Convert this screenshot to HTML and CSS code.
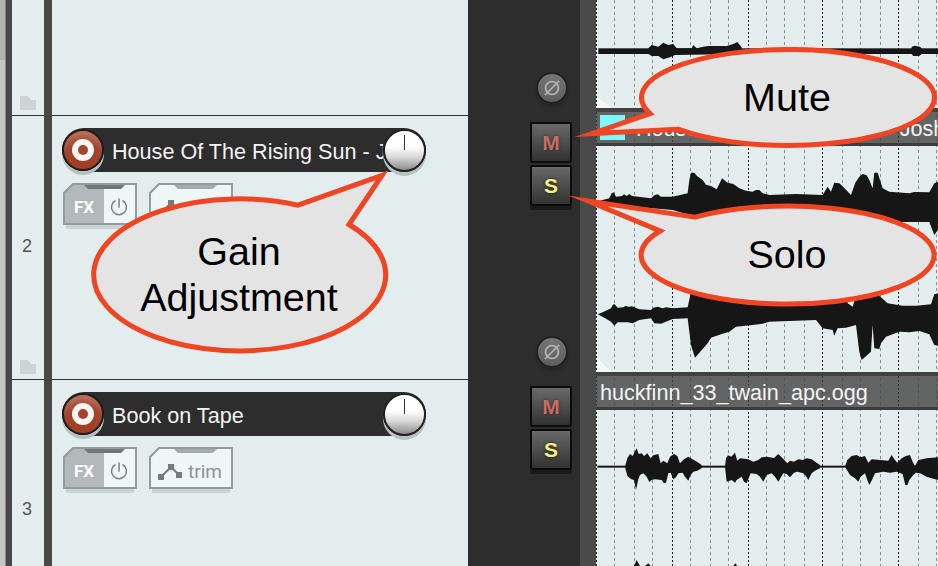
FILE: index.html
```html
<!DOCTYPE html>
<html lang="en">
<head>
  <meta charset="UTF-8" />
  <title>Track controls</title>
  <link rel="stylesheet" href="styles.css">
</head>
<body>
  <div class="app">
    <div class="edge"></div>

    <!-- track numbers -->
    <div class="numbers">
      <div class="num-row">
        <span></span>
        <svg class="folder" width="16" height="14" viewBox="0 0 16 14"><polygon points="0,0 8,0 11,4 16,4 16,14 0,14"/></svg>
      </div>
      <div class="num-row">
        <span>2</span>
        <svg class="folder" width="16" height="14" viewBox="0 0 16 14"><polygon points="0,0 8,0 11,4 16,4 16,14 0,14"/></svg>
      </div>
      <div class="num-row">
        <span>3</span>
      </div>
    </div>

    <div class="divider"></div>

    <!-- track panel -->
    <div class="tracks">
      <div class="track"></div>

      <div class="track">
        <div class="track-bar">
          <button class="rec"><span class="rec-dot"></span></button>
          <span class="track-name">House Of The Rising Sun - Josh</span>
          <div class="knob"></div>
        </div>
        <div class="chips">
          <svg class="chip" width="74" height="46" viewBox="0 0 74 46">
            <polygon class="chip-on" points="10,1 41,1 41,41 1,41 1,10"/>
            <rect class="chip-off" x="41" y="1" width="32" height="40"/>
            <polygon class="chip-line" points="10,1 73,1 73,41 1,41 1,10"/>
            <polygon class="chip-notch" points="21,2 62,2 58,6 25,6"/>
            <rect class="chip-shadow" x="3" y="42" width="68" height="4"/>
            <text class="chip-fx" x="11" y="30">FX</text>
            <path class="chip-power" d="M52.500 17.500a7.500 7.500 0 1 0 7 0M56 15.500v9"/>
          </svg>
          <svg class="chip" width="84" height="46" viewBox="0 0 84 46">
            <polygon class="chip-off" points="10,1 83,1 83,41 1,41 1,10"/>
            <polygon class="chip-line" points="10,1 83,1 83,41 1,41 1,10"/>
            <polygon class="chip-notch chip-notch-light" points="25,2 68,2 64,6 29,6"/>
            <rect class="chip-shadow" x="3" y="42" width="78" height="4"/>
            <path class="chip-env" d="M12 30l10-10 8 8"/>
            <rect class="chip-node" x="9" y="27" width="6" height="6"/>
            <rect class="chip-node" x="19" y="17" width="6" height="6"/>
            <rect class="chip-node" x="27" y="25" width="6" height="6"/>
            <text class="chip-trim" x="39" y="31">trim</text>
          </svg>
        </div>
      </div>

      <div class="track">
        <div class="track-bar">
          <button class="rec"><span class="rec-dot"></span></button>
          <span class="track-name">Book on Tape</span>
          <div class="knob"></div>
        </div>
        <div class="chips">
          <svg class="chip" width="74" height="46" viewBox="0 0 74 46">
            <polygon class="chip-on" points="10,1 41,1 41,41 1,41 1,10"/>
            <rect class="chip-off" x="41" y="1" width="32" height="40"/>
            <polygon class="chip-line" points="10,1 73,1 73,41 1,41 1,10"/>
            <polygon class="chip-notch" points="21,2 62,2 58,6 25,6"/>
            <rect class="chip-shadow" x="3" y="42" width="68" height="4"/>
            <text class="chip-fx" x="11" y="30">FX</text>
            <path class="chip-power" d="M52.500 17.500a7.500 7.500 0 1 0 7 0M56 15.500v9"/>
          </svg>
          <svg class="chip" width="84" height="46" viewBox="0 0 84 46">
            <polygon class="chip-off" points="10,1 83,1 83,41 1,41 1,10"/>
            <polygon class="chip-line" points="10,1 83,1 83,41 1,41 1,10"/>
            <polygon class="chip-notch chip-notch-light" points="25,2 68,2 64,6 29,6"/>
            <rect class="chip-shadow" x="3" y="42" width="78" height="4"/>
            <path class="chip-env" d="M12 30l10-10 8 8"/>
            <rect class="chip-node" x="9" y="27" width="6" height="6"/>
            <rect class="chip-node" x="19" y="17" width="6" height="6"/>
            <rect class="chip-node" x="27" y="25" width="6" height="6"/>
            <text class="chip-trim" x="39" y="31">trim</text>
          </svg>
        </div>
      </div>
    </div>

    <!-- mixer strip -->
    <div class="mixer">
      <div class="strip">
        <button class="phase"><svg width="20" height="20" viewBox="0 0 20 20"><circle cx="10" cy="10" r="6.500"/><path d="M3 17L17 3"/></svg></button>
      </div>
      <div class="strip">
        <button class="btn btn-mute">M</button>
        <button class="btn btn-solo">S</button>
        <button class="phase"><svg width="20" height="20" viewBox="0 0 20 20"><circle cx="10" cy="10" r="6.500"/><path d="M3 17L17 3"/></svg></button>
      </div>
      <div class="strip">
        <button class="btn btn-mute">M</button>
        <button class="btn btn-solo">S</button>
      </div>
    </div>

    <div class="scrollbar"></div>

    <!-- arrange view -->
    <div class="arrange">
      <svg class="grid" width="342" height="566" viewBox="596 0 342 566">
        <path class="grid-dark" d="M596.500 0V566M672.500 0V566M748.500 0V566M822.500 0V566M898.500 0V566"/>
        <path class="grid-light" d="M614.500 0V566M634.500 0V566M652.500 0V566M690.500 0V566M710.500 0V566M728.500 0V566M766.500 0V566M784.500 0V566M804.500 0V566M842.500 0V566M860.500 0V566M880.500 0V566M918.500 0V566M936.500 0V566"/>
      </svg>

      <div class="lane lane-one">
        <svg class="wave" width="342" height="108" viewBox="596 0 342 108">
          <polygon class="corner" points="597,97 597,108 612,108"/>
          <g transform="translate(500 30) scale(.3333)">
            <rect x="295" y="55" width="1020" height="17"/>
            <polygon points="445,55 455,45 475,50 490,38 505,45 520,42 530,55 575,55 580,45 590,55 610,50 625,48 680,48 700,42 712,36 725,52 725,72 525,75 510,82 490,88 475,78 455,78 445,72"/>
            <polygon points="1235,50 1245,47 1260,50 1265,55 1265,72 1258,78 1240,78 1235,72"/>
          </g>
        </svg>
      </div>

      <div class="lane lane-two">
        <div class="clip-head">
          <span class="swatch"></span>
          <span class="clip-name">House Of The Rising Sun - Josh</span>
        </div>
        <svg class="wave" width="342" height="226" viewBox="596 146 342 226">
          <polygon class="corner" points="597,358 597,372 612,372"/>
          <g transform="translate(596 160) scale(.3333)">
            <polygon points="0,125 40,115 47,100 53,97 60,110 78,108 84,103 92,108 100,102 108,108 165,115 175,106 185,103 195,110 230,110 275,100 280,60 285,38 295,38 303,48 320,60 330,74 345,78 362,88 370,72 378,55 395,68 412,72 430,85 450,92 470,95 480,90 490,90 500,100 520,105 600,102 680,105 695,80 705,95 715,68 730,70 745,84 765,105 778,68 790,50 800,42 812,46 820,60 830,85 835,38 845,38 860,85 880,95 940,100 955,96 1000,97 1015,70 1026,65 1026,210 1015,225 1000,186 850,186 790,177 430,174 290,168 230,150 160,144 6,129"/>
          </g>
          <g transform="translate(596 275) scale(.3333)">
            <polygon points="5,118 20,112 45,100 50,90 55,87 65,98 82,97 88,93 100,95 108,94 130,103 165,105 172,98 185,95 200,100 210,97 230,100 275,97 285,50 750,50 755,85 770,95 778,70 850,62 875,85 920,92 960,92 1005,88 1015,58 1026,55 1026,212 1015,210 1000,178 970,168 940,172 910,170 870,185 855,205 850,222 835,220 830,150 825,230 797,255 790,230 780,150 750,158 725,160 715,182 710,165 680,160 660,135 580,138 520,140 500,146 470,150 420,155 400,170 375,178 345,188 335,205 297,248 285,210 275,130 230,132 195,146 175,145 165,130 130,135 110,145 95,142 65,142 55,152 45,140 25,128"/>
          </g>
        </svg>
      </div>

      <div class="lane lane-three">
        <div class="clip-head">
          <span class="clip-name clip-name-first">huckfinn_33_twain_apc.ogg</span>
        </div>
        <svg class="wave" width="342" height="156" viewBox="596 410 342 156">
          <g transform="translate(590 430) scale(.3333)">
            <rect x="22" y="107" width="1022" height="6"/>
            <polygon points="105,110 112,85 120,72 128,78 134,65 140,55 146,72 155,70 162,78 172,70 182,85 190,76 205,72 212,100 220,92 232,100 240,80 252,72 262,78 270,100 282,88 295,80 308,88 322,96 335,105 335,115 322,122 310,125 302,135 295,152 285,140 278,128 265,130 258,142 250,148 242,128 235,130 228,158 222,160 215,150 195,148 185,150 178,156 170,140 160,130 150,135 145,148 138,180 132,150 124,148 112,138"/>
            <polygon points="405,110 408,85 414,76 424,80 435,68 442,92 450,85 475,88 490,95 505,90 515,82 530,80 552,84 565,72 578,85 592,100 600,92 612,95 625,88 638,90 650,85 665,88 680,98 690,105 690,115 675,122 665,130 655,150 648,138 640,130 622,125 612,128 600,142 590,132 580,130 565,155 555,140 545,130 530,135 520,155 510,140 500,132 482,130 470,160 462,155 455,140 440,150 435,158 425,150 410,155"/>
            <polygon points="765,110 772,90 785,78 800,75 812,82 825,78 835,98 845,88 870,90 895,92 905,75 915,90 922,98 935,85 948,78 960,75 968,95 975,108 985,90 1010,85 1044,82 1044,150 1025,145 1010,140 990,130 978,128 970,135 958,150 952,166 946,165 938,132 920,125 900,128 880,125 855,130 846,150 838,165 832,150 825,130 812,140 805,155 795,145 780,135"/>
            <polygon points="132,408 140,390 150,408"/>
            <polygon points="165,408 175,400 182,408"/>
            <polygon points="430,408 436,400 442,408"/>
          </g>
        </svg>
      </div>
    </div>
  </div>

  <!-- annotation balloons on top of the screenshot -->
  <svg class="callouts" width="938" height="566" viewBox="0 0 938 566">
    <path class="balloon" d="M298 205.200L382 175.400 349 224.500A146 76 0 1 1 298 205.200Z"/>
    <text class="balloon-text" x="239" y="265">Gain</text>
    <text class="balloon-text" x="239" y="311">Adjustment</text>
    <path class="balloon" d="M650 113.600L592 133.500 678 129.200A146.500 48 0 1 0 650 113.600Z"/>
    <text class="balloon-text" x="787" y="111">Mute</text>
    <path class="balloon" d="M695 217.100L588 201 660 231A146.500 49 0 1 0 695 217.100Z"/>
    <text class="balloon-text" x="787" y="268">Solo</text>
  </svg>
</body>
</html>
```

FILE: styles.css
```css
body {
  margin: 0;
  width: 938px;
  height: 566px;
  overflow: hidden;
  position: relative;
  font-family: "Liberation Sans", Arial, sans-serif;
}

button {
  font-family: inherit;
  padding: 0;
}

.app {
  display: flex;
  height: 566px;
  background: #e4edee;
}

.edge {
  width: 12px;
  background: linear-gradient(#b2b2b2, #b2b2b2) 0 0 / 5px 60px no-repeat,
    linear-gradient(to right, #c6c6c6 0, #c6c6c6 5px, #474747 6px);
}

.numbers {
  width: 32px;
}

.num-row {
  height: 264px;
  box-sizing: border-box;
  border-bottom: 1px solid #2b3235;
  display: grid;
  grid-template-rows: 1fr auto 1fr;
  justify-items: center;
  color: #555;
  font-size: 18px;
}

.num-row span {
  grid-row: 2;
  margin: 0 2px 2px 0;
}

.num-row:first-child {
  height: 116px;
}

.num-row:last-child {
  height: 186px;
  border-bottom: none;
  grid-template-rows: 119px auto 1fr;
}

.folder {
  grid-row: 3;
  align-self: end;
  margin-bottom: 5px;
  fill: #cbd3d5;
}

.divider {
  width: 8px;
  background: #484a47;
}

.tracks {
  width: 416px;
}

.track {
  height: 264px;
  box-sizing: border-box;
  padding: 12px 0 0 10px;
  border-bottom: 1px solid #2b3235;
}

.track:first-child {
  height: 116px;
}

.track:last-child {
  height: 186px;
  border-bottom: none;
}

.track-bar {
  display: flex;
  align-items: center;
  width: 364px;
  height: 44px;
  background: #2d2d2d;
  border-radius: 22px;
}

.rec {
  flex: none;
  width: 42px;
  height: 42px;
  box-sizing: border-box;
  display: flex;
  align-items: center;
  justify-content: center;
  border: 2px solid #1d1d1d;
  border-radius: 50%;
  background: radial-gradient(circle at 50% 85%, #a23c22 0, #a0452d 55%, #c98a78 100%);
  box-shadow: 0 4px 0 #b7c1c2;
}

.rec-dot {
  width: 10px;
  height: 10px;
  border: 6px solid #fbf6f4;
  border-radius: 50%;
  background: #a2452e;
}

.track-name {
  flex: 1;
  min-width: 0;
  margin-left: 8px;
  padding-top: 3px;
  color: #f2f2f2;
  font-size: 21.6px;
  white-space: nowrap;
  overflow: hidden;
}

.knob {
  flex: none;
  position: relative;
  width: 43px;
  height: 43px;
  box-sizing: border-box;
  border: 2px solid #222;
  border-radius: 50%;
  background: linear-gradient(#fff 0, #fff 40%, #dcdcdc 65%, #8c8c8c 100%);
  box-shadow: 0 4px 0 #b7c1c2;
}

/* little pointer on the gain knob */
.knob::after {
  content: "";
  position: absolute;
  left: 19px;
  top: 4px;
  width: 1px;
  height: 15px;
  background: #333;
}

.chips {
  display: flex;
  gap: 12px;
  margin: 11px 0 0 1px;
}

.chip {
  display: block;
}

.chip-on {
  fill: #b3b8ba;
}

.chip-off {
  fill: #eef6f6;
}

.chip-line {
  fill: none;
  stroke: #919c9c;
  stroke-width: 2;
}

.chip-notch {
  fill: #6f7777;
}

.chip-notch-light {
  fill: #a3acac;
}

.chip-shadow {
  fill: #cad3d3;
}

.chip-fx {
  fill: #fff;
  font-family: Roboto, sans-serif;
  font-weight: 700;
  font-size: 17px;
}

.chip-power {
  fill: none;
  stroke: #7b8080;
  stroke-width: 1.5;
}

.chip-env {
  fill: none;
  stroke: #737b7b;
  stroke-width: 2;
}

.chip-node {
  fill: #737b7b;
}

.chip-trim {
  fill: #8a9393;
  font-family: Roboto, sans-serif;
  font-size: 19px;
}

.mixer {
  width: 112px;
  background: #2d2d2d;
}

.strip {
  height: 264px;
  box-sizing: border-box;
  padding: 6px 0 12px 62px;
  display: flex;
  flex-direction: column;
  align-items: flex-start;
  gap: 2px;
}

.strip:first-child {
  height: 116px;
}

.strip:last-child {
  height: 186px;
}

.btn {
  width: 42px;
  height: 41px;
  box-sizing: border-box;
  border: 2px solid #0c0c0c;
  border-radius: 2px;
  background: linear-gradient(#696969, #323232);
  font-size: 21px;
  font-weight: 700;
  line-height: 1;
}

.btn-mute {
  color: #c96c62;
  text-shadow: 0 0 2px #2a2a2a;
}

.btn-solo {
  color: #f5ee80;
  text-shadow: 0 0 3px #111;
  box-shadow: 0 4px 0 #1b1b1b;
}

.phase {
  margin: auto 0 0 6px;
  width: 32px;
  height: 32px;
  display: flex;
  align-items: center;
  justify-content: center;
  box-sizing: border-box;
  border: 2px solid #222;
  border-radius: 50%;
  background: linear-gradient(#757575, #5e5e5e);
  box-shadow: 0 3px 3px #262626;
}

.phase svg {
  fill: none;
  stroke: #b4b4b4;
  stroke-width: 1.7;
}

.scrollbar {
  width: 16px;
  background: #4a4a4a;
}

.arrange {
  position: relative;
  width: 342px;
  overflow: hidden;
}

.grid {
  position: absolute;
  left: 0;
  top: 0;
}

.grid-dark {
  fill: none;
  stroke: #1e1e1e;
  stroke-dasharray: 2 2;
}

.grid-light {
  fill: none;
  stroke: #858f90;
  stroke-dasharray: 3 3;
}

.lane {
  position: relative;
}

.lane-one {
  height: 108px;
}

.lane-two {
  height: 264px;
}

.wave {
  display: block;
  fill: #161616;
}

.corner {
  fill: #f2f7f7;
}

.clip-head {
  height: 38px;
  box-sizing: border-box;
  display: flex;
  align-items: center;
  border-top: 4px solid #424242;
  border-bottom: 3px solid #3c3c3c;
  background: rgba(66, 66, 66, 0.8);
  color: #f4f4f4;
  font-size: 21.6px;
  white-space: nowrap;
  overflow: hidden;
}

.clip-name {
  padding-top: 3px;
}

.swatch {
  flex: none;
  width: 25px;
  height: 25px;
  margin: 0 11px 0 4px;
  background: #7ff6fb;
}

.clip-name-first {
  margin-left: 4px;
}

.callouts {
  position: absolute;
  left: 0;
  top: 0;
}

.balloon {
  fill: #e4e4e4;
  stroke: #f04423;
  stroke-width: 5;
  stroke-miterlimit: 12;
}

.balloon-text {
  fill: #000;
  font-size: 39.5px;
  text-anchor: middle;
}
```
